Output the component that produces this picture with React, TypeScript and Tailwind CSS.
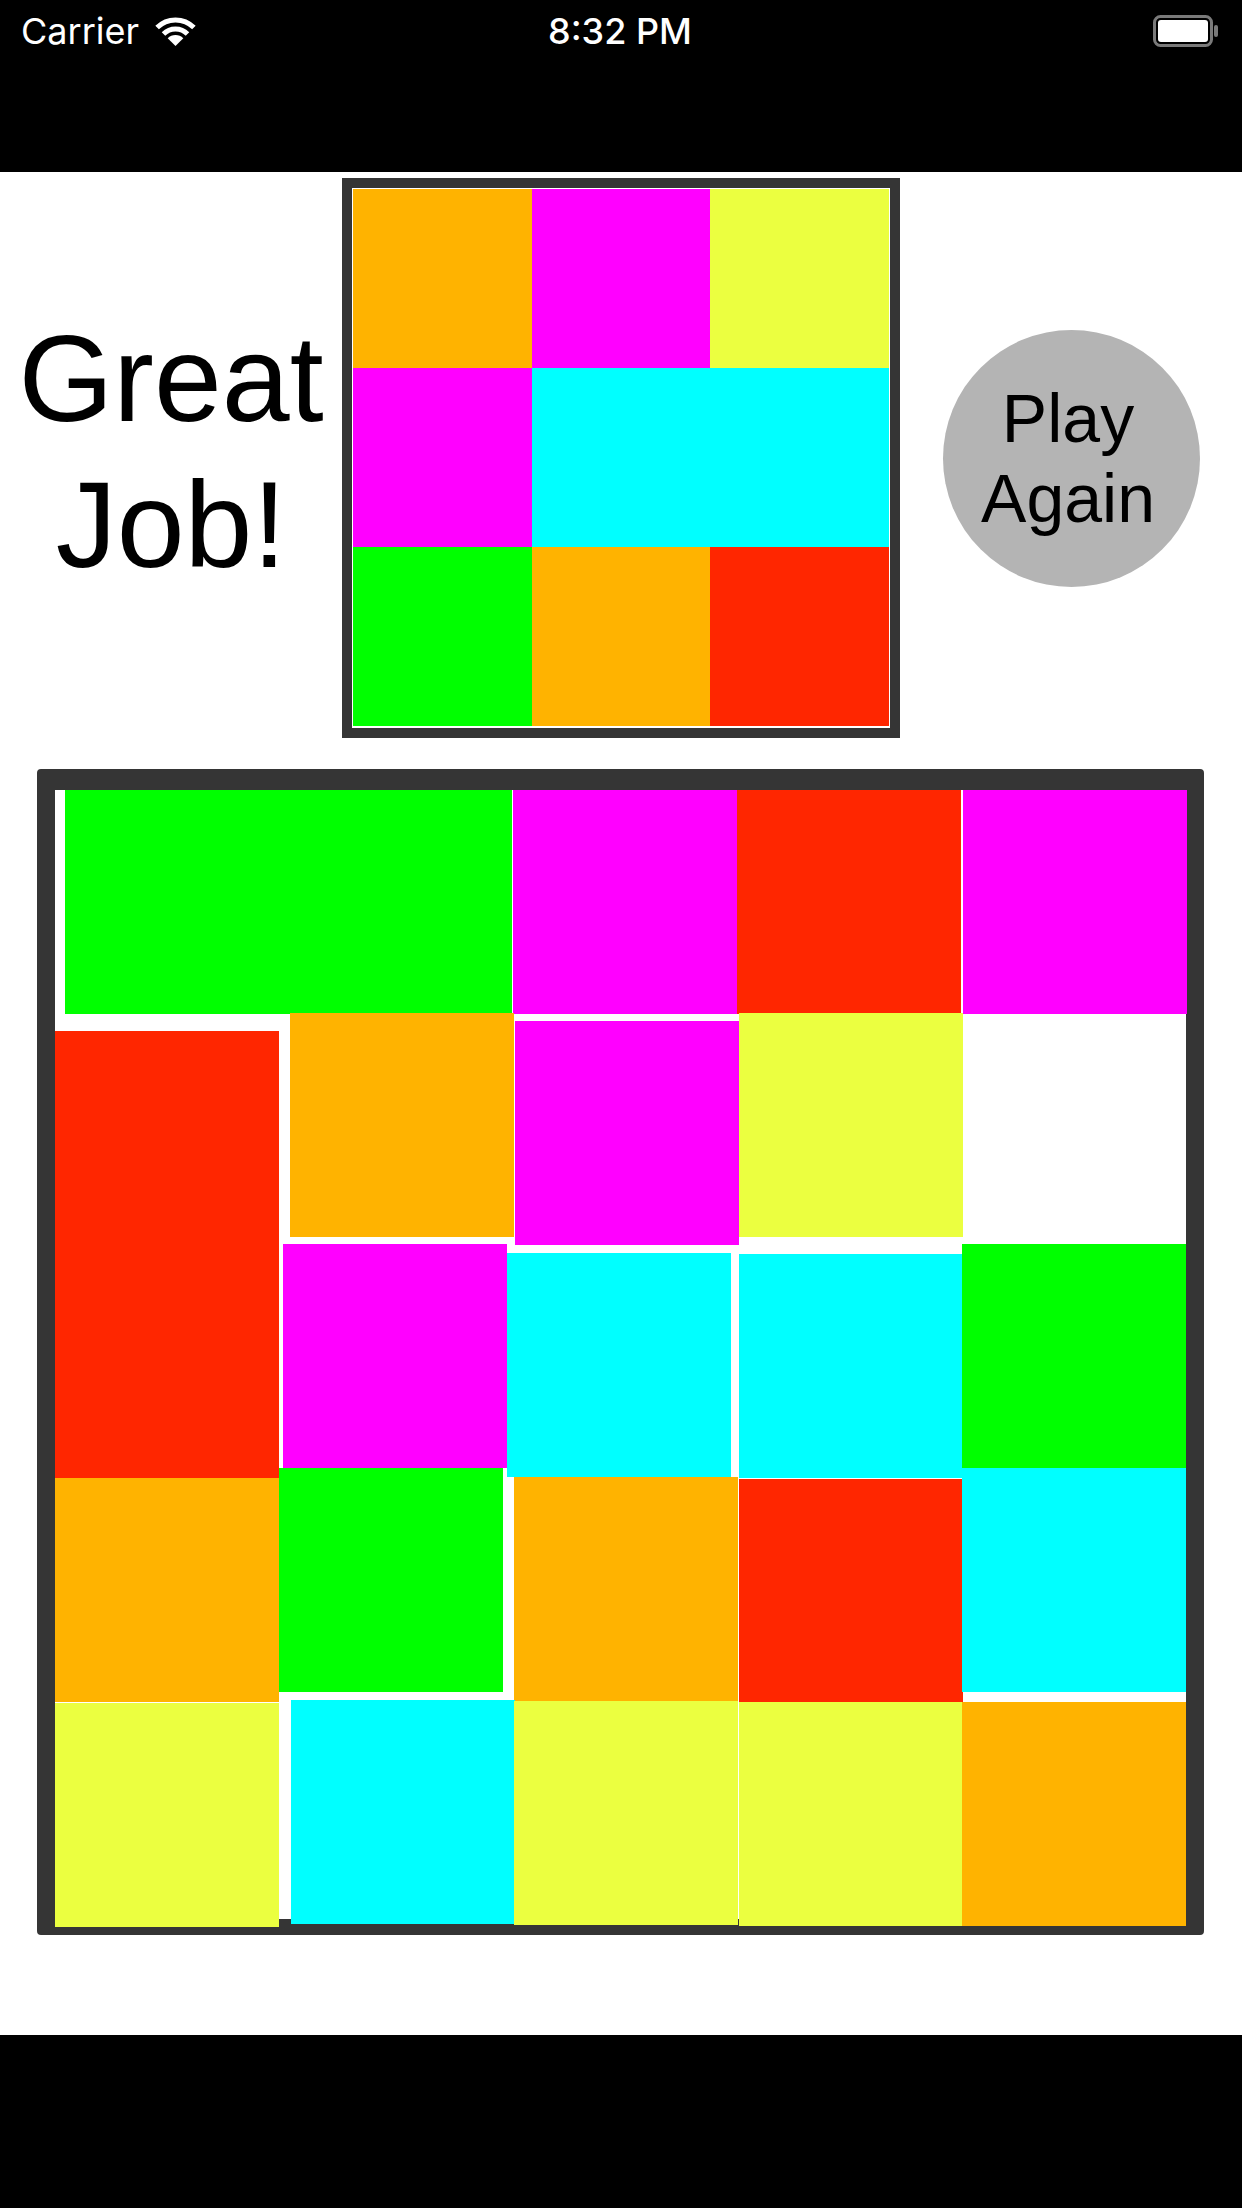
import React from 'react';

const COLORS: Record<string, string> = {
  o: 'bg-[#ffb300]',
  m: 'bg-[#ff00ff]',
  y: 'bg-[#ebff40]',
  c: 'bg-[#00ffff]',
  g: 'bg-[#00ff00]',
  r: 'bg-[#ff2600]',
};

// target picture, 3x3
const goal = ['o', 'm', 'y', 'm', 'c', 'c', 'g', 'o', 'r'];

// board tiles, row by row; shift = where the tile sits inside its cell
const board: { color: string | null; shift: string }[] = [
  // row 1
  { color: 'g', shift: 'translate-x-[10px] translate-y-[0px]' },
  { color: 'g', shift: 'translate-x-[6px] translate-y-[0px]' },
  { color: 'm', shift: 'translate-x-[4px] translate-y-[0px]' },
  { color: 'r', shift: 'translate-x-[2px] translate-y-[0px]' },
  { color: 'm', shift: 'translate-x-[1px] translate-y-[0px]' },
  // row 2
  { color: 'r', shift: 'translate-x-[0px] translate-y-[13px]' },
  { color: 'o', shift: 'translate-x-[8px] translate-y-[-5px]' },
  { color: 'm', shift: 'translate-x-[6px] translate-y-[3px]' },
  { color: 'y', shift: 'translate-x-[4px] translate-y-[-5px]' },
  { color: null, shift: '' },
  // row 3
  { color: 'r', shift: 'translate-x-[0px] translate-y-[8px]' },
  { color: 'm', shift: 'translate-x-[1px] translate-y-[-2px]' },
  { color: 'c', shift: 'translate-x-[-2px] translate-y-[7px]' },
  { color: 'c', shift: 'translate-x-[4px] translate-y-[8px]' },
  { color: 'g', shift: 'translate-x-[0px] translate-y-[-2px]' },
  // row 4
  { color: 'o', shift: 'translate-x-[0px] translate-y-[4px]' },
  { color: 'g', shift: 'translate-x-[-3px] translate-y-[-6px]' },
  { color: 'o', shift: 'translate-x-[5px] translate-y-[3px]' },
  { color: 'r', shift: 'translate-x-[4px] translate-y-[5px]' },
  { color: 'c', shift: 'translate-x-[0px] translate-y-[-6px]' },
  // row 5
  { color: 'y', shift: 'translate-x-[0px] translate-y-[1px]' },
  { color: 'c', shift: 'translate-x-[9px] translate-y-[-2px]' },
  { color: 'y', shift: 'translate-x-[5px] translate-y-[-1px]' },
  { color: 'y', shift: 'translate-x-[4px] translate-y-[0px]' },
  { color: 'o', shift: 'translate-x-[0px] translate-y-[0px]' },
];

function Wifi() {
  return (
    <svg width="45" height="32" viewBox="0 0 45 32" fill="none">
      <path d="M22.5 31 L14.7 23.2 A11 11 0 0 1 30.3 23.2 Z" fill="white" />
      <path d="M10.5 19 A17 17 0 0 1 34.5 19" stroke="white" strokeWidth="5" />
      <path d="M4.1 12.6 A26 26 0 0 1 40.9 12.6" stroke="white" strokeWidth="5" />
    </svg>
  );
}

function Battery() {
  return (
    <svg width="66" height="32" viewBox="0 0 66 32" fill="none">
      <rect x="1.5" y="1.5" width="57" height="29" rx="6" stroke="#7a7a7a" strokeWidth="3" />
      <rect x="5" y="5" width="50" height="22" rx="3" fill="white" />
      <rect x="61" y="10" width="4" height="12" rx="2" fill="#7a7a7a" />
    </svg>
  );
}

function StatusBar() {
  return (
    <div className="h-[172px] bg-black text-white font-['Inter',sans-serif]">
      <div className="grid h-[62px] grid-cols-3 items-center pl-[21px] pr-[23px]">
        <div className="flex items-center gap-[14px]">
          <span className="text-[36px] leading-none">Carrier</span>
          <Wifi />
        </div>
        <div className="text-center text-[36px] font-medium leading-none">8:32 PM</div>
        <div className="flex justify-end">
          <Battery />
        </div>
      </div>
    </div>
  );
}

function Goal() {
  return (
    <div className="h-[560px] w-[558px] border-[10px] border-[#353535] bg-white pl-[1px] pt-[1px]">
      <div className="grid grid-cols-[repeat(3,178.5px)] grid-rows-[repeat(3,179px)]">
        {goal.map((c, i) => (
          <div key={i} className={COLORS[c]} />
        ))}
      </div>
    </div>
  );
}

function Board() {
  return (
    <div className="ml-[37px] mt-[31px] h-[1166px] w-[1167px] rounded-[4px] border-x-[18px] border-b-[16px] border-t-[21px] border-[#353535] bg-white">
      <div className="grid grid-cols-[repeat(5,224px)] grid-rows-[repeat(5,224px)] gap-x-[2.75px] gap-y-[4px]">
        {board.map((t, i) =>
          t.color ? <div key={i} className={`${COLORS[t.color]} ${t.shift}`} /> : <div key={i} />
        )}
      </div>
    </div>
  );
}

export default function App() {
  return (
    <div className="w-[1242px] font-['Liberation_Sans',Arial,sans-serif] text-black">
      <StatusBar />

      <main className="h-[1863px] overflow-hidden bg-white">
        <div className="mt-[6px] flex h-[560px] items-center">
          <div className="flex flex-1 justify-center">
            <p className="mb-[12px] text-center text-[122px] leading-[146px]">
              Great
              <br />
              Job!
            </p>
          </div>
          <Goal />
          <div className="flex flex-1 justify-center">
            <button className="flex h-[257px] w-[257px] items-center justify-center rounded-full bg-[#b4b4b4] pr-[6px] text-center text-[68px] leading-[80px]">
              Play
              <br />
              Again
            </button>
          </div>
        </div>

        <Board />
      </main>

      <div className="h-[173px] bg-black" />
    </div>
  );
}
